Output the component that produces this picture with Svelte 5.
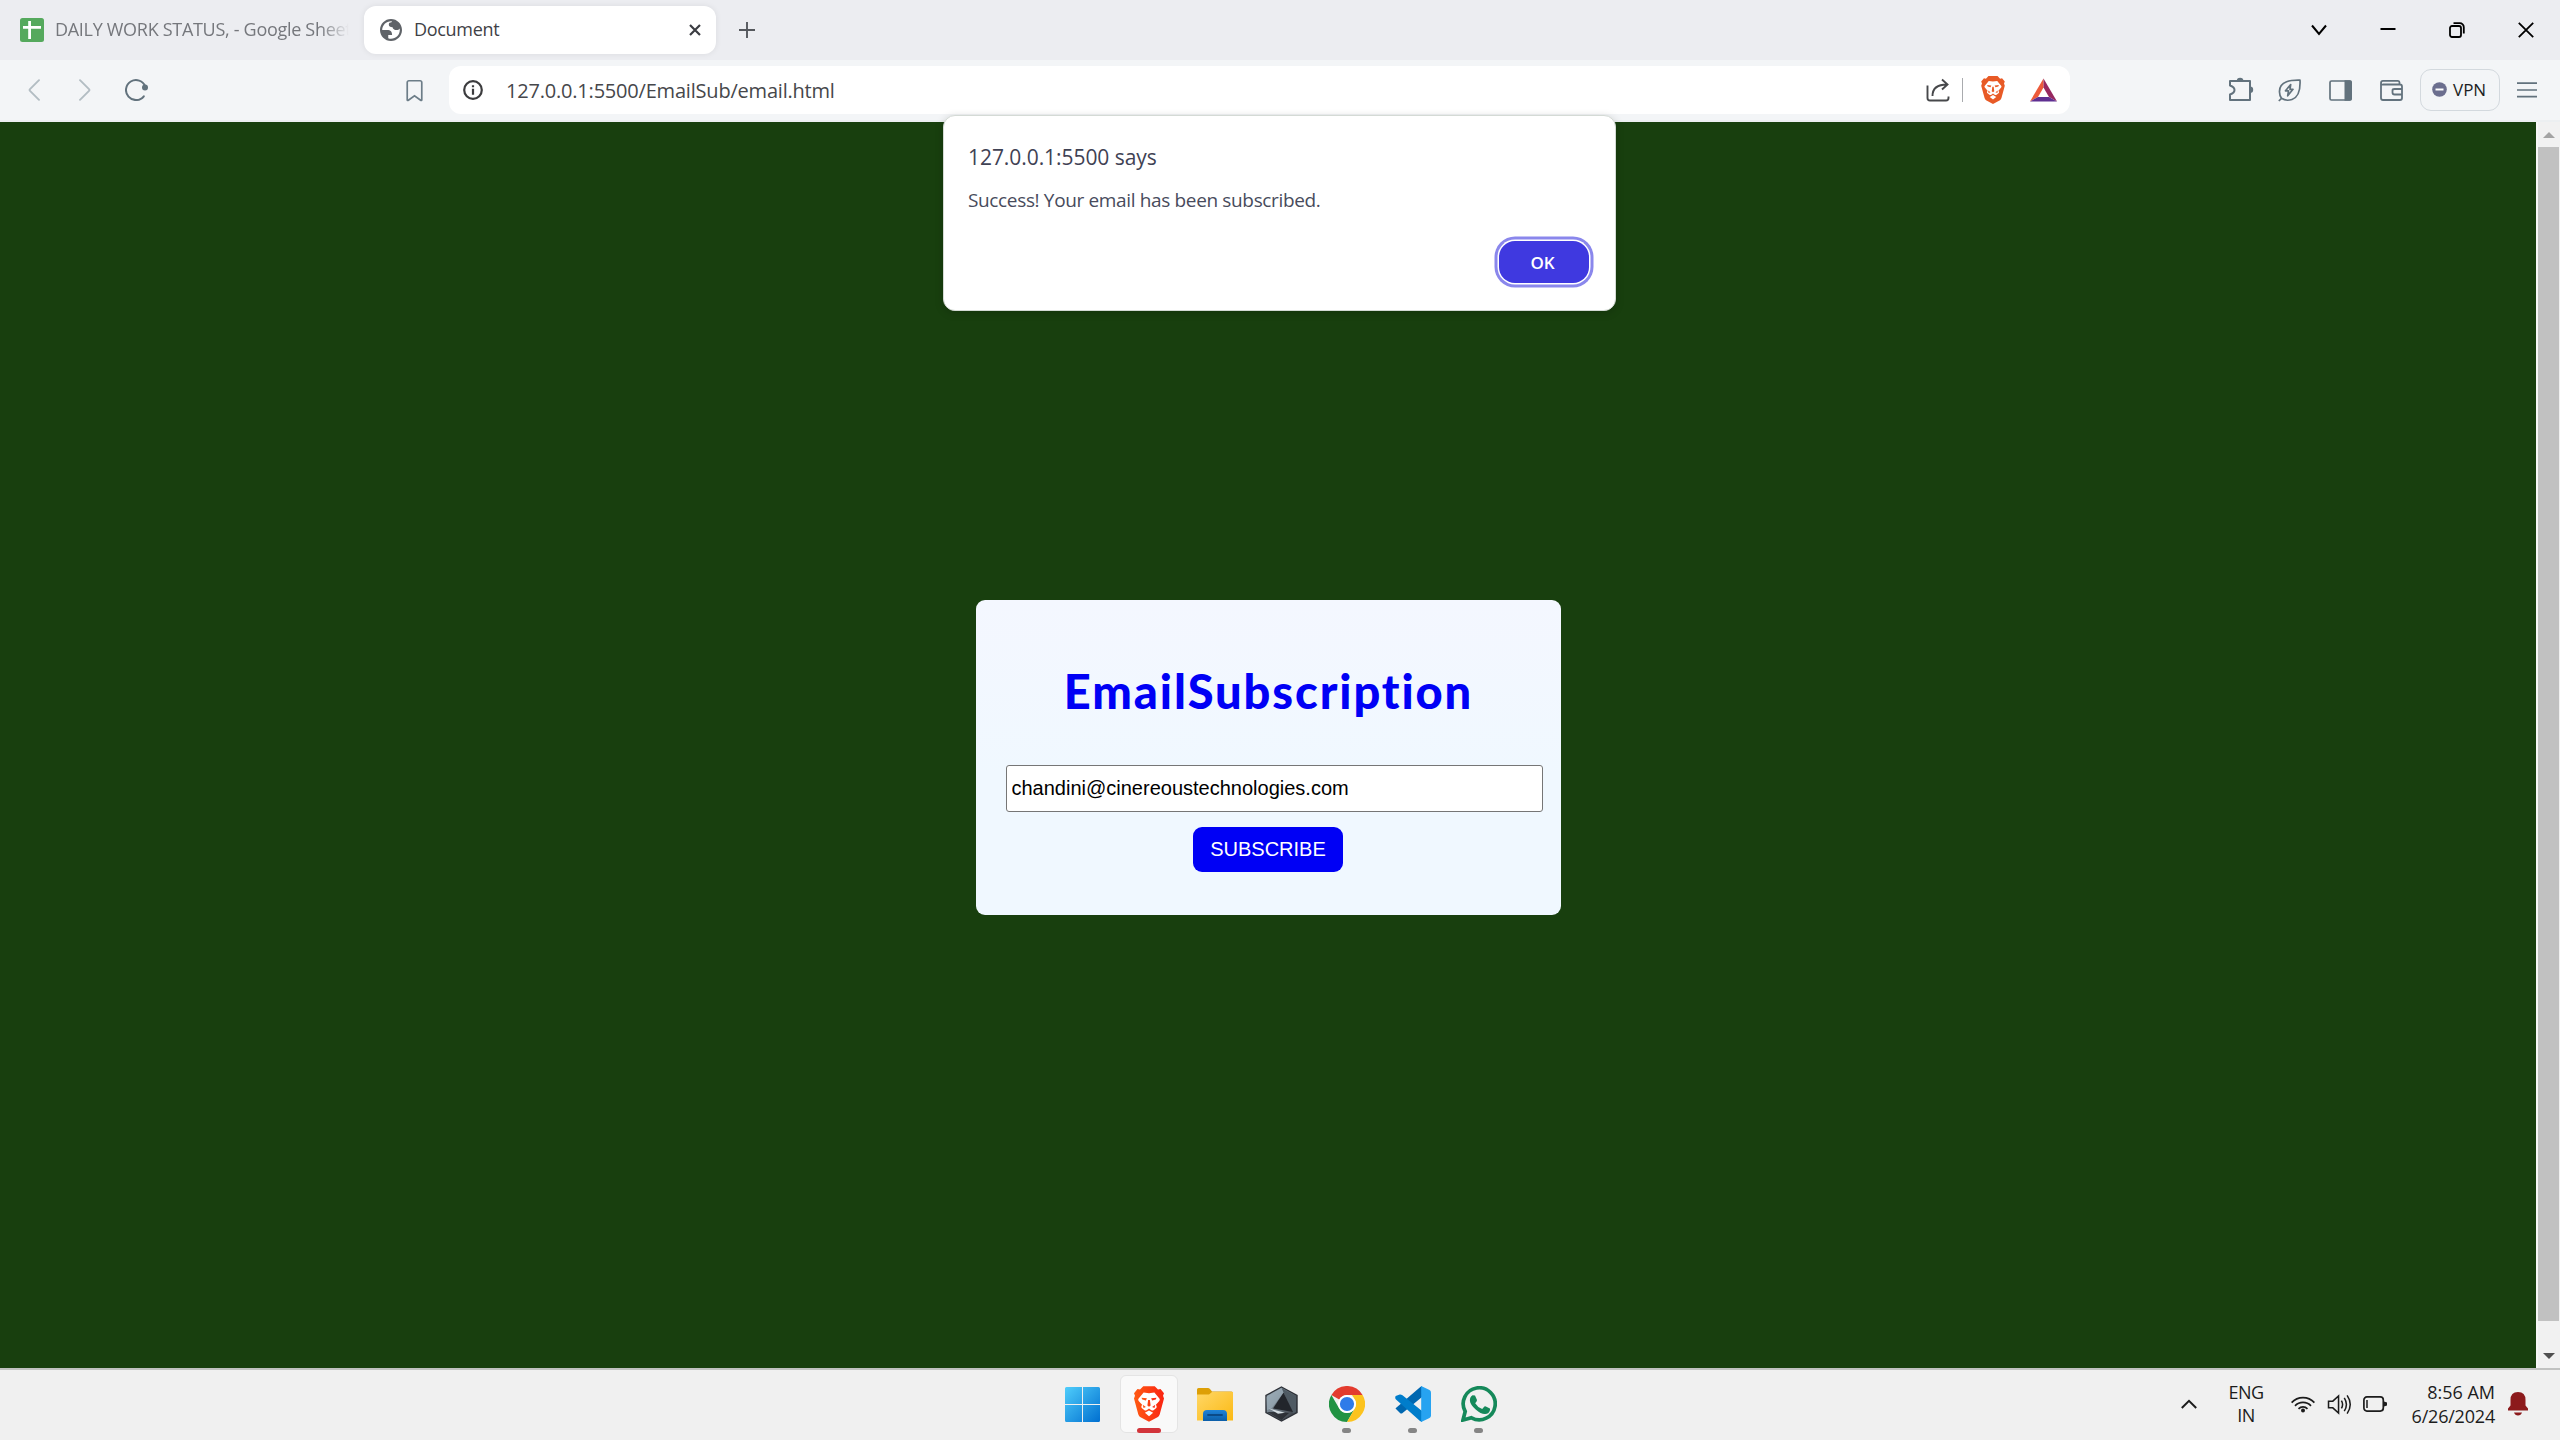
<script>
  let email = $state('chandini@cinereoustechnologies.com');
</script>

{#snippet lion(fill)}
  <path {fill} d="M7.4 0h9.2l2.6 2.7 2-.4L24 5.6l-.8 2 .8 2.3-3.4 12.6c-.3 1-.8 1.600-1.500 2.100L12 28.500l-7.100-3.900c-.7-.5-1.200-1.100-1.500-2.100L0 9.900l.8-2.300-.8-2L2.800 2.300l2 .4z" />
  <path fill="#fff" d="M12 5.600l4.300-.6 4 4.900c.6.9.3 1.500-.2 2.100l-2.600 2.900c.7 1.100 1 2 .1 2.700l-2 1.600c-1 .5-1.600.1-3.600-1.400-2 1.500-2.600 1.900-3.600 1.400l-2-1.600c-.9-.7-.6-1.600.1-2.700L3.900 12c-.5-.6-.8-1.200-.2-2.100l4-4.900z" />
  <path fill="#fff" d="M12 19.400l3.300 1.900L12 24l-3.300-2.700z" />
  <path {fill} d="M6 9.200l4.300.5-.8 1.700L6.600 10.600zM18 9.200l-4.300.5.8 1.700 2.900-.8zM11.300 11h1.400l.6 4.500-1.300 1-1.300-1zM7 14.800l2.500 1.800-1.900.8zM17 14.800l-2.500 1.800 1.900.8z" />
{/snippet}

<div class="desktop">
  <header class="tabs">
    <div class="tab idle">
      <svg class="sheets" viewBox="0 0 24 24"><rect width="24" height="24" rx="2.500" fill="#55a95d" /><path d="M3 9.300h18M9.600 3v18" stroke="#fff" stroke-width="2.800" /></svg>
      <span class="tab-title fade">DAILY WORK STATUS, - Google Sheet</span>
    </div>
    <div class="tab active">
      <svg class="globe" viewBox="2 2 20 20">
        <path fill="#5f6368" fill-rule="evenodd" d="M12 2C6.480 2 2 6.480 2 12s4.480 10 10 10 10-4.480 10-10S17.520 2 12 2zM4 12h4.400c3.400 0 4.600 1.700 4.600 4.600H9.500v2.900c.8.300 1.600.5 2.500.5 4.400 0 8-3.600 8-8 0-.5 0-1-.1-1.400-.6.900-1.700 1.400-2.900 1.400-1.900 0-3.300-1-3.600-2.600-2.200 0-3.400-.6-3.400-2.400 0-1.400.9-2 2.500-2 0-.4.200-.7.400-1C12.600 4 12.300 4 12 4c-4.400 0-8 3.600-8 8z" />
      </svg>
      <span class="tab-title">Document</span>
      <svg class="x" viewBox="0 0 12 12"><path d="M1 1l10 10M11 1L1 11" stroke="#3b3d42" stroke-width="2.200" /></svg>
    </div>
    <svg class="plus" viewBox="0 0 16 16"><path d="M8 0v16M0 8h16" stroke="#55585d" stroke-width="1.900" /></svg>
    <div class="window-controls">
      <svg width="16" height="12" viewBox="0 0 16 12"><path d="M1 1.500l7 8.500 7-8.500" fill="none" stroke="#000" stroke-width="2" /></svg>
      <svg width="16" height="16" viewBox="0 0 16 16"><path d="M.5 7h15" stroke="#000" stroke-width="2" /></svg>
      <svg width="16" height="16" viewBox="0 0 16 16" fill="none" stroke="#000" stroke-width="1.800"><rect x="1" y="4" width="11" height="11" rx="2" /><path d="M4.500 1.200h6.300a4 4 0 0 1 4 4v6.300" /></svg>
      <svg width="16" height="16" viewBox="0 0 16 16"><path d="M.8.800l14.400 14.400M15.200.8L.8 15.200" stroke="#000" stroke-width="1.800" /></svg>
    </div>
  </header>

  <nav class="toolbar">
    <div class="history">
      <svg width="12" height="22" viewBox="0 0 12 22"><path d="M11 1.200L2 10.200q-.8.800 0 1.600l9 9" fill="none" stroke="#b3bdc3" stroke-width="1.900" stroke-linecap="round" /></svg>
      <svg width="12" height="22" viewBox="0 0 12 22"><path d="M1 1.200l9 9q.8.800 0 1.600l-9 9" fill="none" stroke="#b3bdc3" stroke-width="1.900" stroke-linecap="round" /></svg>
      <svg width="24" height="22" viewBox="0 0 24 22"><path d="M18.800 17.300A10 10 0 1 1 20.300 7.400" fill="none" stroke="#62727d" stroke-width="2" stroke-linecap="round" /><circle cx="20" cy="8.600" r="3" fill="#62727d" /></svg>
    </div>
    <svg class="bookmark" viewBox="0 0 18 23"><path d="M1.300 21.500V2.900a1.700 1.700 0 0 1 1.700-1.700h12a1.700 1.700 0 0 1 1.700 1.700v18.600q-.3 1-1.200.3L9 17.200l-6.500 4.600q-.9.700-1.200-.3z" fill="none" stroke="#6c7d88" stroke-width="1.800" /></svg>
    <div class="address">
      <svg class="info" viewBox="0 0 20 20"><circle cx="10" cy="10" r="8.800" fill="none" stroke="#3c3c3e" stroke-width="2.200" /><path d="M10 8.700v6M10 5.200v2" stroke="#3c3c3e" stroke-width="2.200" /></svg>
      <span class="url">127.0.0.1:5500/EmailSub/email.html</span>
      <svg class="share" viewBox="0 0 24 24"><path d="M1.500 7.500V20a2.500 2.500 0 0 0 2.500 2.500h16a2.500 2.500 0 0 0 2.500-2.500v-1.500M6.500 18C6.500 10.500 11 6.500 21 6.500M16 1.500l5.500 5-5.500 5" fill="none" stroke="#47484b" stroke-width="1.900" /></svg>
      <span class="divider"></span>
      <svg class="shield" viewBox="0 0 24 28.500">{@render lion('#e85a26')}</svg>
      <svg class="bat" viewBox="0 0 27 23"><path d="M13.500 0L0 23l8-4.600 5.500-9.400z" fill="#ec5a3a" /><path d="M13.500 0L27 23l-8-4.600L13.500 9z" fill="#97285f" /><path d="M0 23h27l-8-4.600H8z" fill="#5f2f91" /></svg>
    </div>
    <div class="actions">
      <svg width="26" height="26" viewBox="0 0 26 26"><path d="M2 5h20v19H2v-5.500q4.500-1.500 4.500-4.500T2 9.500z" fill="none" stroke="#62727d" stroke-width="2" stroke-linejoin="round" /><path d="M8.800 5a3.300 3.300 0 0 1 6.600 0zM22 10.500a3.200 3.200 0 0 1 0 6.400z" fill="#62727d" /></svg>
      <svg width="23" height="23" viewBox="0 0 23 23" fill="none" stroke="#62727d" stroke-width="1.700" stroke-linejoin="round"><path d="M22 1.200C14 1 1 1.500 1.500 13q0 3.500 2 6.300Q8 22.500 14 20.500C21 18 22.500 11 22 1.200zM3.500 19.300L.8 22" /><path d="M12.700 5.500L7.500 11.800h3l-.8 5 5.300-6.500h-3z" /></svg>
      <svg width="23" height="21" viewBox="0 0 23 21"><rect x="1" y="1" width="21" height="19" rx="1.500" fill="none" stroke="#62727d" stroke-width="1.700" /><path d="M15.500.3H21A2 2 0 0 1 23 2.300v16.400a2 2 0 0 1-2 2h-5.500z" fill="#62727d" /></svg>
      <svg width="23" height="21" viewBox="0 0 23 21" fill="none" stroke="#62727d" stroke-width="1.800"><path d="M19.500 4V2.500q0-1.600-1.500-1.600H3Q1 .9 1 3t2 1.500h17q2 0 2 2V18q0 2-2 2H3q-2 0-2-2V3M22 9H14.500q-2 0-2 1.500v2q0 2 2 2H22" /></svg>
    </div>
    <div class="vpn">
      <svg width="15" height="15" viewBox="0 0 15 15"><circle cx="7.500" cy="7.500" r="7.300" fill="#6b6e8e" /><path d="M3.500 7.500h8" stroke="#fff" stroke-width="2" /></svg>
      <span>VPN</span>
    </div>
    <svg class="menu" viewBox="0 0 20 16"><path d="M0 1.200h20M0 8h20M0 14.600h20" stroke="#62727d" stroke-width="1.700" /></svg>
  </nav>

  <div class="viewport">
    <main>
      <form class="card" onsubmit={(e) => e.preventDefault()}>
        <h1>EmailSubscription</h1>
        <input type="text" bind:value={email} />
        <button class="subscribe">SUBSCRIBE</button>
      </form>
    </main>
    <aside class="scrollbar">
      <svg width="12" height="6" viewBox="0 0 12 6"><path d="M0 6L6 0l6 6z" fill="#a3a3a3" /></svg>
      <div class="thumb"></div>
      <svg width="12" height="6" viewBox="0 0 12 6"><path d="M0 0l6 6 6-6z" fill="#505050" /></svg>
    </aside>
  </div>

  <footer class="taskbar">
    <div class="apps">
      <div class="app">
        <svg width="35" height="35" viewBox="0 0 35 35"><defs><linearGradient id="win" x1="0" y1="0" x2="35" y2="35" gradientUnits="userSpaceOnUse"><stop offset="0" stop-color="#4fcdfb" /><stop offset="1" stop-color="#006fd0" /></linearGradient></defs><path fill="url(#win)" d="M1.500 0H17v17H0V1.500A1.500 1.500 0 0 1 1.500 0zM18 0h15.500A1.500 1.500 0 0 1 35 1.500V17H18zM0 18h17v17H1.500A1.500 1.500 0 0 1 0 33.500zM18 18h17v15.500a1.500 1.500 0 0 1-1.500 1.500H18z" /></svg>
      </div>
      <div class="app current">
        <svg width="30" height="36" viewBox="0 0 24 28.500"><defs><linearGradient id="brave"><stop offset="0" stop-color="#ff5a13" /><stop offset="1" stop-color="#fa2412" /></linearGradient></defs>{@render lion('url(#brave)')}</svg>
        <i></i>
      </div>
      <div class="app">
        <svg width="36" height="33" viewBox="0 0 36 33"><defs><linearGradient id="fold" x1="0" y1="0" x2="1" y2="1"><stop offset="0" stop-color="#ffd767" /><stop offset="1" stop-color="#fbb913" /></linearGradient><linearGradient id="fb" x1="0" y1="0" x2="0" y2="1"><stop offset="0" stop-color="#1f83d8" /><stop offset="1" stop-color="#0c5ea8" /></linearGradient></defs><path d="M0 1.500Q0 0 1.500 0h9.500q1 0 2 1l2 2.500h19.500Q36 3.500 36 5v4H0z" fill="#dd9f06" /><path d="M0 6.500h12l3-2.500h21v28.500H0z" fill="url(#fold)" /><path d="M6 33v-7q0-4 4-4h16q4 0 4 4v7z" fill="url(#fb)" /><path d="M11 27h14" stroke="#0b4a87" stroke-width="1.800" stroke-linecap="round" /></svg>
      </div>
      <div class="app">
        <svg width="33" height="36" viewBox="0 0 33 36"><defs><linearGradient id="hex" x1="0" y1="0" x2="1" y2="1"><stop offset="0" stop-color="#a8b9c4" /><stop offset=".5" stop-color="#6a7680" /><stop offset="1" stop-color="#2b2d33" /></linearGradient></defs><path d="M16.500 1L32 9.500v17L16.500 35 1 26.500v-17z" fill="url(#hex)" stroke="#2c3037" stroke-width="1.400" /><path d="M16.500 2L31 10v16l-3 1.500L18.500 6.500z" fill="#4f5a63" /><path d="M18.500 6.500L8 22.500l20 3.500z" fill="#22252b" /><path d="M1.500 11L16.500 2l2 4.500-12 16L2 24z" fill="#9aabb6" opacity=".7" /><path d="M2 26l14 0 8 1-7.500 7z" fill="#24272c" opacity=".8" /><path d="M4 22.500l16 4.200-7 1z" fill="#d3dce1" /></svg>
      </div>
      <div class="app">
        <svg width="36" height="36" viewBox="0 0 36 36"><path d="M2.400 9A18 18 0 0 1 33.600 9H18a9 9 0 0 0-7.800 4.500z" fill="#e33b2e" /><path d="M2.400 9A18 18 0 0 0 18 36l7.800-13.500a9 9 0 0 1-15.600 0z" fill="#219343" /><path d="M33.600 9A18 18 0 0 1 18 36l7.800-13.500A9 9 0 0 0 25.800 13.500L23 9z" fill="#fcc31e" /><circle cx="18" cy="18" r="9" fill="#fff" /><circle cx="18" cy="18" r="7.100" fill="#2f7be9" /></svg>
        <i></i>
      </div>
      <div class="app">
        <svg width="36" height="36" viewBox="0 0 36 36"><path d="M1 23l4 4q1.300 1 2.600 0L27 11V.400Q26.500 0 25.300 1L.9 22q-.8.500.1 1z" fill="#0067b0" /><path d="M.7 10l4-1.400q1-.5 2.800.7L27 25v11l-2-1L1 13.500q-1.400-1.500-.3-3.500z" fill="#007dcb" /><path d="M26.200.1L34.500 4Q36 4.800 36 6.500v23q0 1.700-1.500 2.500l-8.300 3.900z" fill="#27a3f1" /></svg>
        <i></i>
      </div>
      <div class="app">
        <svg width="36" height="36" viewBox="0 0 36 36"><path d="M2 34l2.200-8.500A16 16 0 1 1 10.500 31.800z" fill="none" stroke="#15895a" stroke-width="3.700" /><path d="M11.500 9.300l2.500.2 2 4.600q.3.900-1.800 3.100 2.600 4.300 7 5.900l2.200-2.500q.6-.7 1.500-.2l4 2.100q.5.500-.2 2.500-1 2.800-4.500 3-4 .3-9.500-4.500-5.500-5-5.800-8.800-.2-3.700 2.600-5.400z" fill="#15895a" /></svg>
        <i></i>
      </div>
    </div>
    <div class="tray">
      <svg class="up" viewBox="0 0 16 10"><path d="M.8 9L8 1.800 15.200 9" fill="none" stroke="#1c1c1c" stroke-width="2" /></svg>
      <div class="lang"><span>ENG</span><span>IN</span></div>
      <svg class="wifi" viewBox="0 0 24 18" fill="none" stroke="#1c1c1c" stroke-width="1.700"><path d="M.6 7.600a15.500 15.500 0 0 1 22.800 0M4 10.800a11 11 0 0 1 16 0M7.500 13.800a6.300 6.300 0 0 1 9 0" /><circle cx="12" cy="15.500" r="2" fill="#1c1c1c" stroke="none" /></svg>
      <svg class="volume" viewBox="0 0 25 22" fill="none" stroke="#1c1c1c" stroke-width="1.600"><path d="M1 7.500h4.500l6-5.500v18l-6-5.500H1zM14.500 7q2.500 4 0 8M17.500 4q4.500 7 0 14M20.500 1.500q6.500 9.500 0 19" /></svg>
      <svg class="battery" viewBox="0 0 24 16"><rect x=".9" y=".9" width="19.400" height="14.200" rx="3" fill="none" stroke="#1c1c1c" stroke-width="1.700" /><path d="M4 4v8" stroke="#1c1c1c" stroke-width="1.500" /><path d="M21 5.500l3 1v3l-3 1z" fill="#1c1c1c" /></svg>
      <div class="clock"><span>8:56 AM</span><span class="date">6/26/2024</span></div>
      <svg class="bell" viewBox="0 0 20 24"><path d="M0 18.500v-2l2.500-3V8q0-8 7.500-8t7.500 8v5.500l2.500 3v2zM6 20.500h8q-1 3-4 3t-4-3z" fill="#8c1a1c" /></svg>
    </div>
  </footer>

  <section class="dialog">
    <h2>127.0.0.1:5500 says</h2>
    <p>Success! Your email has been subscribed.</p>
    <button class="ok">OK</button>
  </section>
</div>

<style>
  :global(body) { margin: 0; }
  .desktop {
    position: relative;
    width: 2560px;
    height: 1440px;
    display: flex;
    flex-direction: column;
    overflow: hidden;
    font-family: "Open Sans", "Noto Sans", sans-serif;
  }
  svg { display: block; flex: none; }

  .tabs { display: flex; align-items: center; height: 60px; background: #ecedf1; }
  .tab { display: flex; align-items: center; box-sizing: border-box; height: 48px; }
  .idle { width: 364px; padding-left: 20px; gap: 11px; }
  .active {
    width: 352px;
    padding: 0 15px 0 16px;
    gap: 12px;
    border-radius: 12px;
    background: #fff;
    box-shadow: 0 0 6px rgba(0, 0, 0, .08);
  }
  .sheets { width: 24px; height: 24px; }
  .globe { width: 22px; height: 22px; }
  .tab-title { padding-bottom: 2px; font-size: 18px; line-height: 26px; letter-spacing: -.3px; color: #3f4146; white-space: nowrap; }
  .fade {
    width: 300px;
    color: #75777c;
    mask-image: linear-gradient(90deg, #000 265px, transparent 294px);
  }
  .x { width: 12px; height: 12px; margin-left: auto; }
  .plus { width: 16px; height: 16px; margin-left: 23px; }
  .window-controls { display: flex; align-items: center; gap: 53px; margin-left: auto; padding-right: 26px; }

  .toolbar { display: flex; align-items: center; height: 60px; background: #f3f5f7; border-bottom: 2px solid #eceff1; }
  .history { display: flex; align-items: center; gap: 39px; padding-left: 28px; }
  .history svg:last-child { margin-left: -5px; }
  .bookmark { width: 17px; height: 23px; margin-left: 257px; }
  .address { display: flex; align-items: center; box-sizing: border-box; width: 1621px; height: 48px; margin-left: 26px; padding: 0 13px 0 14px; border-radius: 12px; background: #fff; }
  .info { width: 20px; height: 20px; }
  .url { margin-left: 23px; font-size: 20px; letter-spacing: -.2px; color: #46474b; }
  .share { width: 24px; height: 24px; margin-left: auto; }
  .divider { width: 1px; height: 24px; margin: 0 18px 0 12px; background: #a9abae; }
  .shield { width: 24px; height: 28px; }
  .bat { width: 27px; height: 24px; margin-left: 25px; }
  .actions { display: flex; align-items: center; gap: 28px; margin-left: 158px; }
  .actions svg:first-child { margin: 0 -4px 3px 0; }
  .vpn { display: flex; align-items: center; gap: 6px; box-sizing: border-box; width: 80px; height: 42px; margin-left: 17px; padding: 0 0 1px 11px; border: 1px solid #d3d9de; border-radius: 11px; font-size: 17px; color: #1c1e22; }
  .menu { width: 20px; height: 16px; margin-left: 17px; }

  .viewport { display: flex; flex: 1; min-height: 0; }
  main { display: flex; flex: 1; align-items: flex-start; justify-content: center; background: #183f0e; }
  .card { display: flex; flex-direction: column; align-items: center; box-sizing: border-box; width: 585px; height: 315px; margin: 478px 0 0 1px; border-radius: 9px; background: linear-gradient(#f4f7ff, #f0f8ff 55%); }
  h1 { margin: 61px 0 0; font: 900 47px/60px Lato, sans-serif; letter-spacing: 1.900px; color: #0000f5; }
  input { box-sizing: border-box; width: 537px; height: 47px; margin: 44px 0 0 11px; padding: 0 5px; border: 1px solid #767676; border-radius: 3px; outline: 0; background: #fff; font: 20px "Liberation Sans", Arial, sans-serif; color: #000; }
  .subscribe { width: 150px; height: 45px; margin: 15px 1px 0 0; padding: 0 0 1px; border: 0; border-radius: 9px; background: #0000f5; font: 20px "Liberation Sans", Arial, sans-serif; color: #fff; }
  .scrollbar { display: flex; flex-direction: column; align-items: center; box-sizing: border-box; width: 24px; padding: 10px 0 9px; background: #f1f1f1; border-left: 2px solid #f7f7f7; }
  .thumb { width: 21px; height: 1174px; margin: 9px 1px auto 0; background: #c1c1c1; }

  .taskbar { display: flex; box-sizing: border-box; height: 72px; border-top: 2px solid #c1c2c1; background: #f0f0f0; }
  .apps { display: flex; gap: 8px; padding: 5px 0 0 1054px; }
  .app { position: relative; display: flex; align-items: center; justify-content: center; box-sizing: border-box; width: 58px; height: 58px; }
  .app:first-child { padding-right: 1px; }
  .current { border: 1px solid #e4e4e4; border-radius: 6px; background: #f9f9f9; }
  .app i { position: absolute; left: 24px; bottom: 0; width: 9px; height: 5px; border-radius: 3px; background: #858585; }
  .current i { left: 16px; bottom: -1px; width: 24px; background: #d2343a; }
  .tray { display: flex; align-items: center; margin-left: auto; padding: 0 32px 2px 0; font-size: 18px; color: #1c1c1c; }
  .up { width: 16px; height: 10px; }
  .lang { display: flex; flex-direction: column; align-items: center; width: 34px; margin-left: 32px; line-height: 23px; letter-spacing: -.5px; }
  .wifi { width: 24px; height: 18px; margin-left: 28px; }
  .volume { width: 25px; height: 21px; margin-left: 12px; }
  .battery { width: 24px; height: 16px; margin-left: 11px; }
  .clock { display: flex; flex-direction: column; align-items: flex-end; width: 84px; margin: 0 13px 0 24px; line-height: 24px; white-space: nowrap; }
  .date { letter-spacing: -.2px; }
  .bell { width: 20px; height: 24px; }

  /* Alert lies over both the toolbar edge and the page */
  .dialog {
    position: absolute;
    left: 943px;
    top: 115px;
    display: flex;
    flex-direction: column;
    box-sizing: border-box;
    width: 673px;
    height: 196px;
    padding: 26px 24px 0;
    border: 1px solid #d4dad5;
    border-radius: 12px;
    background: #fff;
    box-shadow: 0 2px 8px rgba(0, 0, 0, .18);
  }
  h2 { margin: 0; font-size: 21px; font-weight: 400; line-height: 30px; letter-spacing: -.06px; color: #3f4254; }
  p { margin: 14px 0 0; font-size: 19px; line-height: 28px; letter-spacing: -.35px; color: #484b5c; }
  .ok { align-self: flex-end; width: 90px; height: 42px; margin: 27px 2px 0 0; padding: 0 3px 0 0; border: 0; border-radius: 16px; background: #3f39e0; box-shadow: 0 0 0 1.500px #fff, 0 0 0 4.500px #8a87ec; font: 600 17px "Open Sans", sans-serif; color: #fff; }
</style>
